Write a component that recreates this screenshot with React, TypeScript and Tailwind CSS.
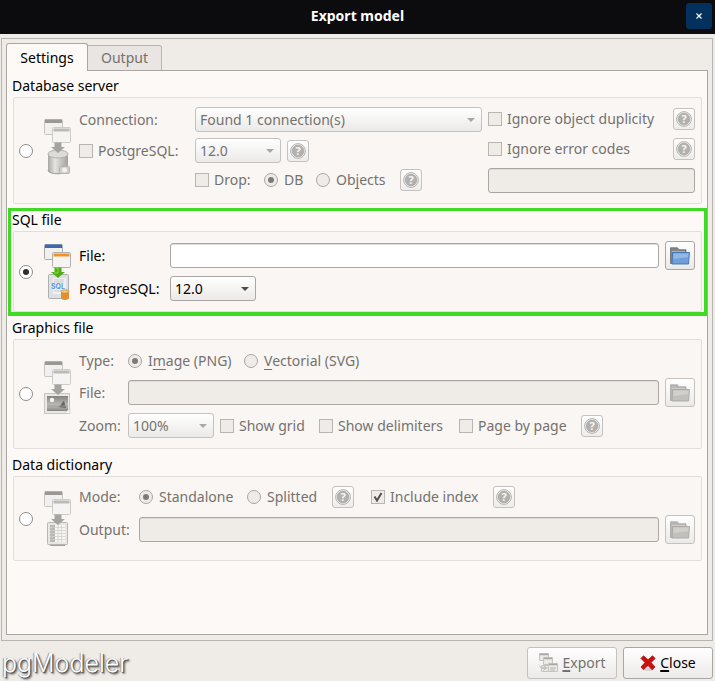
import type { ReactNode } from "react";

type Kind = "db" | "sql" | "image" | "dict";

function SectionIcon({ kind }: { kind: Kind }) {
  const color = kind === "sql";
  const bar1 = color ? "#3d68ad" : "#9a9894";
  const bar2 = color ? "#f0922b" : "#bcbab6";
  const arrow = color ? "#4fae14" : "#a5a3a0";
  return (
    <svg width="28" height="58" viewBox="0 0 28 58" className="block" aria-hidden="true">
      <defs>
        <linearGradient id="metal" x1="0" x2="1" y1="0" y2="0">
          <stop offset="0" stopColor="#a9a7a3" />
          <stop offset="0.35" stopColor="#e6e4e1" />
          <stop offset="1" stopColor="#a3a19d" />
        </linearGradient>
        <linearGradient id="photo" x1="0" x2="0" y1="0" y2="1">
          <stop offset="0" stopColor="#858380" />
          <stop offset="0.65" stopColor="#c2c0bc" />
          <stop offset="1" stopColor="#858380" />
        </linearGradient>
      </defs>
      <rect x="1.5" y="1.5" width="18" height="15" rx="1" fill="#f1f0ee" stroke={color ? "#a9aaac" : "#c9c6c2"} />
      <rect x="2" y="1.5" width="17" height="3.5" fill={bar1} />
      <rect x="9.5" y="9.5" width="18" height="15" rx="1" fill="#f5f4f2" stroke={color ? "#b2b1af" : "#cfccc8"} />
      <rect x="10.5" y="10.5" width="16" height="3" fill={bar2} />
      {kind === "db" && (
        <g>
          <path d="M5 36v16c0 5 20 5 20 0V36z" fill="url(#metal)" />
          <path d="M5 52c0 5 20 5 20 0" fill="none" stroke="#999793" />
          <ellipse cx="15" cy="36" rx="10" ry="4" fill="#dedcd9" stroke="#b5b3af" />
          <rect x="16.5" y="48.5" width="10" height="7" rx="1" fill="#d0ceca" stroke="#b5b3af" />
          <rect x="19" y="47" width="4" height="2" fill="#b5b3af" />
          <circle cx="21.5" cy="52" r="2.5" fill="#f4f2f0" />
        </g>
      )}
      {kind === "sql" && (
        <g>
          <rect x="5.5" y="31.5" width="20" height="24" rx="1" fill="#dfe0e1" stroke="#adafb1" />
          <rect x="10" y="35" width="13" height="16" fill="#eef0f2" />
          <path d="M11 37h10M11 39h10M11 48h7" stroke="#c8cacd" />
          <text x="8" y="46" fontSize="7" fontWeight="700" fill="#5b97e6" fontFamily="Inter, sans-serif">SQL</text>
          <path d="M18 48.5v6.500c0 2.500 8 2.500 8 0v-6.500z" fill="#e0912f" />
          <ellipse cx="22" cy="48.5" rx="4" ry="1.8" fill="#f9c77c" stroke="#bb7622" strokeWidth="0.6" />
        </g>
      )}
      {kind === "image" && (
        <g>
          <rect x="1.5" y="33.5" width="25" height="20" fill="#eae8e5" stroke="#c9c6c2" />
          <rect x="4" y="36" width="21" height="15" fill="url(#photo)" />
          <circle cx="9" cy="40" r="2.2" fill="#f4f3f1" />
          <path d="M15 47c3-1 4-5 6-6l2 7z" fill="#686663" />
          <path d="M4 46h21" stroke="#9a9894" />
          <path d="M21 53.5l6-5v5z" fill="#faf8f6" stroke="#c9c6c2" strokeWidth="0.7" />
        </g>
      )}
      {kind === "dict" && (
        <g>
          <rect x="4.5" y="32.5" width="20" height="22" rx="1" fill="#e9e7e4" stroke="#b9b7b3" />
          <rect x="7" y="35" width="15" height="17" fill="#f7f6f4" />
          <rect x="7" y="35" width="5" height="17" fill="#bab8b4" />
          <path d="M7 37.500h15M7 40.500h15M7 43.500h15M7 46.500h15M7 49.500h15M15 35v17M18.500 35v17" stroke="#d3d1cd" strokeWidth="0.8" />
          <path d="M7 55.500h15" stroke="#a3a19d" />
        </g>
      )}
      <path d="M11.500 24.500h7v4.500h3.500l-7 6-7-6h3.500z" fill={arrow} />
      {color && <path d="M13 25h2v5h-4" fill="none" stroke="#8bdc4d" />}
    </svg>
  );
}

function Help() {
  return (
    <button
      type="button"
      disabled
      aria-label="Help"
      className="flex h-[22px] w-[22px] shrink-0 items-center justify-center rounded-[3px] border border-[#c4c1be] bg-linear-to-b from-white to-[#efedeb]"
    >
      <svg width="16" height="16" viewBox="0 0 16 16">
        <circle cx="8" cy="8" r="7.4" fill="#f3f2f0" stroke="#aeaca9" strokeWidth="0.9" />
        <circle cx="8" cy="8" r="5.9" fill="#b3b1ae" stroke="#a3a19e" strokeWidth="0.6" />
        <text x="8" y="12" textAnchor="middle" fontSize="11" fontWeight="700" fill="#f8f7f5" fontFamily="Noto Sans, sans-serif">?</text>
      </svg>
    </button>
  );
}

function FolderButton({ active = false }: { active?: boolean }) {
  return (
    <button
      type="button"
      disabled={!active}
      aria-label="Browse"
      className={`flex h-[29px] w-[30px] shrink-0 items-center justify-center rounded-[3px] border bg-linear-to-b from-white to-[#eceae8] ${active ? "border-[#a9a6a3]" : "border-[#c4c1be]"}`}
    >
      <svg width="20" height="18" viewBox="0 0 20 18">
        <path d="M.5 16.500V.8h7l1.500 2h7V16.500z" fill={active ? "#858585" : "#b9b7b4"} stroke={active ? "#686868" : "#a8a6a3"} strokeWidth="0.8" />
        <path d="M2 4.500h13" stroke={active ? "#b0b0b0" : "#d0cecb"} />
        <path d="M2.500 5.500h17l-1 11.500H2z" fill={active ? "#6f9fd8" : "#c2c0bd"} stroke={active ? "#3f72b5" : "#a8a6a3"} strokeWidth="0.9" />
        <path d="M3.500 6.500h15l-.4 4C12 10 8 12 3.200 12z" fill={active ? "#93b8e4" : "#d2d0cd"} />
      </svg>
    </button>
  );
}

interface RadioProps {
  name: string;
  children?: ReactNode;
  className?: string;
  checked?: boolean;
  disabled?: boolean;
  label?: string;
}

function Radio({ name, children, className = "", checked, disabled, label }: RadioProps) {
  return (
    <label className={`flex shrink-0 items-center gap-[6px] whitespace-nowrap ${className}`}>
      <input
        type="radio"
        name={name}
        defaultChecked={checked}
        disabled={disabled}
        aria-label={label}
        className="grid h-[14px] w-[14px] shrink-0 appearance-none place-content-center rounded-full border border-[#8f8c89] bg-white before:h-[6px] before:w-[6px] before:rounded-full checked:before:bg-[#2e2e2e] disabled:border-[#a9a6a3] disabled:bg-[#efebe7] disabled:checked:before:bg-[#7d7b79]"
      />
      {children && <span>{children}</span>}
    </label>
  );
}

function Check({ children, checked = false, className = "" }: { children: ReactNode; checked?: boolean; className?: string }) {
  return (
    <label className={`flex shrink-0 items-center gap-[5px] whitespace-nowrap ${className}`}>
      <span className="relative block h-[14px] w-[14px] shrink-0">
        <input type="checkbox" defaultChecked={checked} disabled className="block h-[14px] w-[14px] appearance-none border border-[#b8b5b2] bg-[#efebe7]" />
        {checked && (
          <svg className="pointer-events-none absolute inset-0" width="14" height="14" viewBox="0 0 14 14">
            <path d="M3.500 6.500l2.500 4L10.500 3" fill="none" stroke="#555351" strokeWidth="2" />
          </svg>
        )}
      </span>
      <span>{children}</span>
    </label>
  );
}

function Select({ value, label, id, disabled = true, className }: { value: string; label: string; id?: string; disabled?: boolean; className: string }) {
  return (
    <div className={`relative shrink-0 ${className}`}>
      <select
        id={id}
        disabled={disabled}
        aria-label={id ? undefined : label}
        className="block h-full w-full appearance-none rounded-[3px] border border-[#a9a6a3] bg-linear-to-b from-white to-[#eceae8] pl-[4px] text-black disabled:border-[#c4c1be] disabled:text-[#747270] disabled:opacity-100"
      >
        <option>{value}</option>
      </select>
      <svg className="pointer-events-none absolute top-1/2 right-[7px] -translate-y-1/2" width="8" height="4" viewBox="0 0 8 4">
        <path d="M0 0h8L4 4z" fill={disabled ? "#a9a7a5" : "#4d4d4d"} />
      </svg>
    </div>
  );
}

function Field({ id, label, disabled = true, className = "" }: { id?: string; label?: string; disabled?: boolean; className?: string }) {
  return (
    <input
      id={id}
      aria-label={label}
      type="text"
      disabled={disabled}
      className={`h-[25px] min-w-0 rounded-[3px] border border-[#a9a6a3] bg-white px-[5px] shadow-[inset_0_1px_0_#dedbd8] disabled:bg-[#efebe7] ${className}`}
    />
  );
}

interface SectionProps {
  title: string;
  kind: Kind;
  checked?: boolean;
  iconClass?: string;
  className?: string;
  highlight?: boolean;
  children: ReactNode;
}

function Section({ title, kind, checked, iconClass = "", className = "", highlight = false, children }: SectionProps) {
  return (
    <section className="relative">
      <h2 className="flex h-[22px] items-center pl-[5px]">{title}</h2>
      <div className={`ml-[6px] mr-[5px] flex rounded-[2px] border border-[#e2dedb] bg-[#faf6f3] pl-[5px] pr-[6px] ${className}`}>
        <Radio name="target" checked={checked} label={title} className="mr-[10px]" />
        <div className={`mr-[8px] w-[28px] shrink-0 ${iconClass}`}>
          <SectionIcon kind={kind} />
        </div>
        {children}
      </div>
      {highlight && <div className="pointer-events-none absolute top-[-1px] right-0 bottom-[-4px] left-px border-3 border-b-4 border-[#3fd926]" />}
    </section>
  );
}

export default function App() {
  return (
    <div className="flex min-h-screen flex-col bg-[#efebe7] font-['Noto_Sans','Open_Sans',sans-serif] text-[14px] leading-[20px] text-black">
      <header className="relative flex h-[34px] items-center justify-center bg-[#0c0c0f] pb-[2px] text-white">
        <h1 className="font-bold">Export model</h1>
        <button type="button" aria-label="Close window" className="absolute top-[3px] right-[3px] flex h-[26px] w-[26px] items-center justify-center rounded-[3px] bg-[#03305c]">
          <svg width="6" height="6" viewBox="0 0 6 6">
            <path d="M.5.5l5 5M5.500.5l-5 5" stroke="#fff" strokeWidth="1.2" />
          </svg>
        </button>
      </header>

      <main className="mt-[4px] mr-[2px] ml-px flex flex-1 flex-col border border-[#b8b4b1] p-[4px] pb-[5px]">
        <div role="tablist" className="flex h-[27px] items-end">
          <button role="tab" aria-selected="true" type="button" className="z-10 -mb-px h-[28px] w-[82px] shrink-0 rounded-t-[3px] border border-b-0 border-[#a9a6a3] bg-[#fdf9f6]">
            Settings
          </button>
          <button role="tab" aria-selected="false" type="button" className="-mb-px h-[26px] w-[74px] shrink-0 rounded-tr-[3px] border border-l-0 border-[#b8b4b1] bg-[#e9e5e2] text-[#747270]">
            Output
          </button>
        </div>

        <div role="tabpanel" className="flex flex-1 flex-col gap-[5px] border border-[#a9a6a3] bg-[#fdf9f6] pt-[4px]">
          <Section title="Database server" kind="db" iconClass="self-start pt-[20px]" className="text-[#747270]">
            <div className="flex min-w-0 flex-1 gap-[6px] pt-[9px] pb-[10px]">
              <div className="flex min-w-0 flex-1 flex-col gap-[6px]">
                <div className="flex h-[25px] items-center">
                  <span className="w-[116px] shrink-0">Connection:</span>
                  <Select value="Found 1 connection(s)" label="Connection" className="h-[25px] min-w-0 flex-1" />
                </div>
                <div className="flex h-[25px] items-center">
                  <Check className="w-[116px]">PostgreSQL:</Check>
                  <Select value="12.0" label="PostgreSQL version" className="mr-[6px] h-[25px] w-[86px]" />
                  <Help />
                </div>
                <div className="flex h-[22px] items-center pl-[116px]">
                  <Check className="w-[69px]">Drop:</Check>
                  <Radio name="drop" checked disabled className="w-[52px]">DB</Radio>
                  <Radio name="drop" disabled className="w-[84px]">Ob<u className="underline-offset-3">j</u>ects</Radio>
                  <Help />
                </div>
              </div>
              <div className="flex w-[207px] shrink-0 flex-col gap-[8px] pt-px">
                <div className="flex items-center justify-between">
                  <Check>Ignore object duplicity</Check>
                  <Help />
                </div>
                <div className="flex items-center justify-between">
                  <Check>Ignore error codes</Check>
                  <Help />
                </div>
                <Field label="Error codes" />
              </div>
            </div>
          </Section>

          <Section title="SQL file" kind="sql" checked highlight iconClass="self-center" className="">
            <div className="flex min-w-0 flex-1 flex-col gap-[6px] pt-[9px] pb-[10px]">
              <div className="flex items-center">
                <label htmlFor="sql-file" className="w-[91px] shrink-0">File:</label>
                <Field id="sql-file" disabled={false} className="mr-[6px] flex-1" />
                <FolderButton active />
              </div>
              <div className="flex items-center">
                <label htmlFor="sql-version" className="w-[91px] shrink-0">PostgreSQL:</label>
                <Select id="sql-version" label="PostgreSQL" value="12.0" disabled={false} className="h-[25px] w-[86px]" />
              </div>
            </div>
          </Section>

          <Section title="Graphics file" kind="image" iconClass="self-start pt-[20px]" className="text-[#747270]">
            <div className="flex min-w-0 flex-1 flex-col gap-[6px] pt-[10px] pb-[10px]">
              <div className="flex h-[22px] items-center">
                <span className="w-[49px] shrink-0">Type:</span>
                <Radio name="type" checked disabled className="w-[116px]">I<u className="underline-offset-3">m</u>age (PNG)</Radio>
                <Radio name="type" disabled><u className="underline-offset-3">V</u>ectorial (SVG)</Radio>
              </div>
              <div className="flex items-center">
                <label htmlFor="image-file" className="w-[49px] shrink-0">File:</label>
                <Field id="image-file" className="mr-[6px] flex-1" />
                <FolderButton />
              </div>
              <div className="flex items-center">
                <label htmlFor="zoom" className="w-[49px] shrink-0">Zoom:</label>
                <Select id="zoom" label="Zoom" value="100%" className="mr-[6px] h-[25px] w-[86px]" />
                <Check className="w-[99px]">Show grid</Check>
                <Check className="w-[140px]">Show delimiters</Check>
                <Check className="w-[122px]">Page by page</Check>
                <Help />
              </div>
            </div>
          </Section>

          <Section title="Data dictionary" kind="dict" iconClass="self-start pt-[13px]" className="text-[#747270]">
            <div className="flex min-w-0 flex-1 flex-col gap-[7px] pt-[9px] pb-[16px]">
              <div className="flex items-center">
                <span className="w-[60px] shrink-0">Mode:</span>
                <Radio name="mode" checked disabled className="w-[108px]">Standalone</Radio>
                <Radio name="mode" disabled className="w-[85px]">Splitted</Radio>
                <Help />
                <Check checked className="ml-[17px] w-[122px]">Include index</Check>
                <Help />
              </div>
              <div className="flex items-center">
                <label htmlFor="dict-output" className="w-[60px] shrink-0">Output:</label>
                <Field id="dict-output" className="mr-[6px] flex-1" />
                <FolderButton />
              </div>
            </div>
          </Section>
        </div>
      </main>

      <footer className="flex items-center gap-[6px] pt-[6px] pr-[2px] pb-[2px] pl-[2px]">
        <span className="mr-auto font-[Inter,sans-serif] text-[25px] leading-[32px] font-light text-white [text-shadow:1px_1px_1px_#444,-1px_0_1px_#999,2px_2px_2px_#777]">
          pgModeler
        </span>
        <button type="button" disabled className="flex h-[32px] w-[90px] items-center justify-center gap-[4px] rounded-[3px] border border-[#c4c1be] bg-linear-to-b from-white to-[#eceae8] text-[#747270]">
          <svg width="20" height="20" viewBox="0 0 20 20">
            <g fill="#eceae7" stroke="#c6c4c0">
              <path d="M1.500.5h9v7h-9z" />
              <path d="M5.500 4.500h9v7h-9z" />
              <path d="M3.500 12.500h7v6h-7zM10.500 10.500h9v8h-9z" />
            </g>
            <path d="M2 1.500h8M6 5.500h8M11 11.500h8" stroke="#aaa8a4" strokeWidth="1.5" />
            <path d="M0 8c0 4 2 6 6 6l-1-2 5 3-5 3 1-2c-4 0-6-4-6-8z" fill="#c4c2be" />
            <path d="M12 15h6M12 17h5" stroke="#b4b2ae" />
          </svg>
          <span><u className="decoration-2 underline-offset-2">E</u>xport</span>
        </button>
        <button type="button" className="flex h-[32px] w-[90px] items-center justify-center gap-[4px] rounded-[3px] border border-[#a9a6a3] bg-linear-to-b from-white to-[#eceae8]">
          <svg width="16" height="16" viewBox="0 0 16 16">
            <ellipse cx="8" cy="14.5" rx="6" ry="1.5" fill="#d5d3d1" />
            <path d="M3.500.8L8 4.800l4.500-4L15.200 3.500 11 7.500l4 4.500-3 2.700-4-4.200-4.500 4L1 12l4-4.500L1 3.500z" fill="#cc0f0f" stroke="#a40000" strokeWidth="0.7" />
          </svg>
          <span><u className="decoration-2 underline-offset-2">C</u>lose</span>
        </button>
      </footer>
    </div>
  );
}
